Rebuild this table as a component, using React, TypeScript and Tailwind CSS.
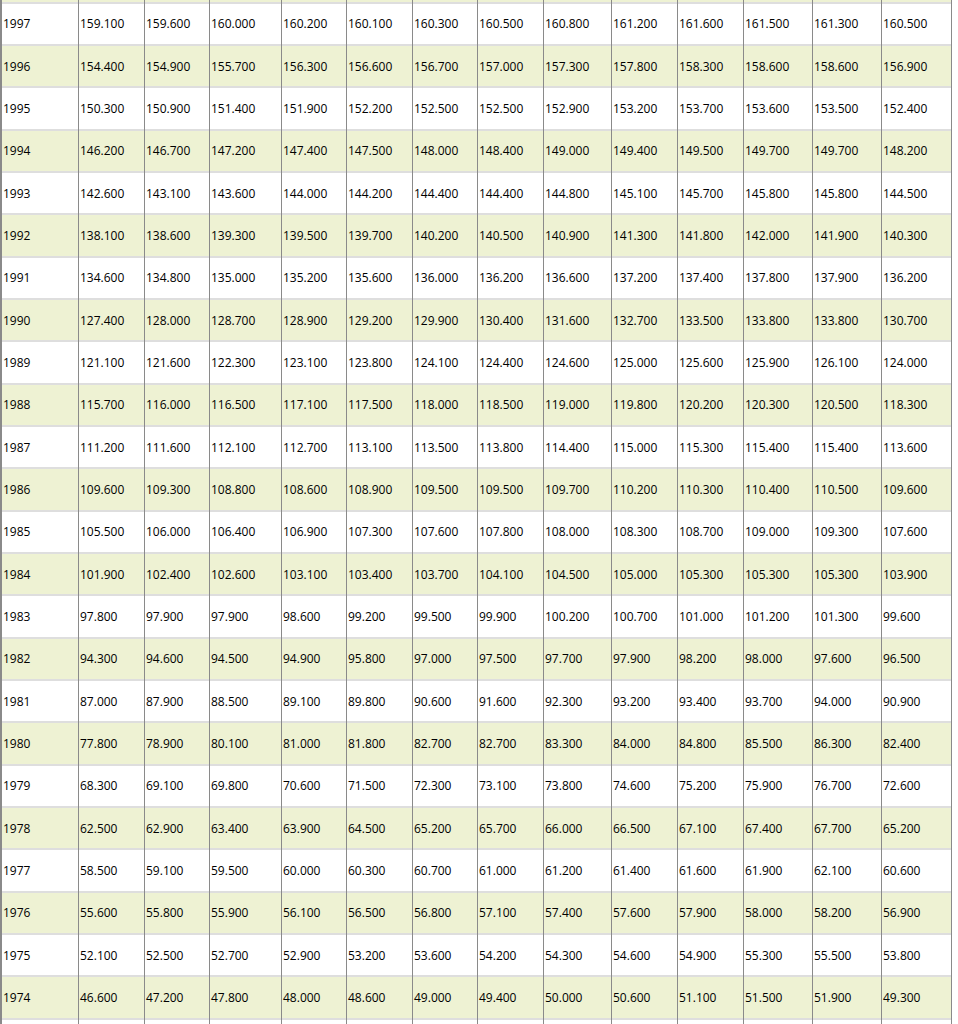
import React from 'react';

const widths = [
  'w-[77px]', 'w-[66px]', 'w-[65px]', 'w-[72px]', 'w-[65px]', 'w-[66px]', 'w-[65px]',
  'w-[66px]', 'w-[68px]', 'w-[66px]', 'w-[66px]', 'w-[69px]', 'w-[69px]', 'w-[70px]',
];

const rows: [string, string][] = [
  ['1998', ''],
  ['1997', '159.100 159.600 160.000 160.200 160.100 160.300 160.500 160.800 161.200 161.600 161.500 161.300 160.500'],
  ['1996', '154.400 154.900 155.700 156.300 156.600 156.700 157.000 157.300 157.800 158.300 158.600 158.600 156.900'],
  ['1995', '150.300 150.900 151.400 151.900 152.200 152.500 152.500 152.900 153.200 153.700 153.600 153.500 152.400'],
  ['1994', '146.200 146.700 147.200 147.400 147.500 148.000 148.400 149.000 149.400 149.500 149.700 149.700 148.200'],
  ['1993', '142.600 143.100 143.600 144.000 144.200 144.400 144.400 144.800 145.100 145.700 145.800 145.800 144.500'],
  ['1992', '138.100 138.600 139.300 139.500 139.700 140.200 140.500 140.900 141.300 141.800 142.000 141.900 140.300'],
  ['1991', '134.600 134.800 135.000 135.200 135.600 136.000 136.200 136.600 137.200 137.400 137.800 137.900 136.200'],
  ['1990', '127.400 128.000 128.700 128.900 129.200 129.900 130.400 131.600 132.700 133.500 133.800 133.800 130.700'],
  ['1989', '121.100 121.600 122.300 123.100 123.800 124.100 124.400 124.600 125.000 125.600 125.900 126.100 124.000'],
  ['1988', '115.700 116.000 116.500 117.100 117.500 118.000 118.500 119.000 119.800 120.200 120.300 120.500 118.300'],
  ['1987', '111.200 111.600 112.100 112.700 113.100 113.500 113.800 114.400 115.000 115.300 115.400 115.400 113.600'],
  ['1986', '109.600 109.300 108.800 108.600 108.900 109.500 109.500 109.700 110.200 110.300 110.400 110.500 109.600'],
  ['1985', '105.500 106.000 106.400 106.900 107.300 107.600 107.800 108.000 108.300 108.700 109.000 109.300 107.600'],
  ['1984', '101.900 102.400 102.600 103.100 103.400 103.700 104.100 104.500 105.000 105.300 105.300 105.300 103.900'],
  ['1983', '97.800 97.900 97.900 98.600 99.200 99.500 99.900 100.200 100.700 101.000 101.200 101.300 99.600'],
  ['1982', '94.300 94.600 94.500 94.900 95.800 97.000 97.500 97.700 97.900 98.200 98.000 97.600 96.500'],
  ['1981', '87.000 87.900 88.500 89.100 89.800 90.600 91.600 92.300 93.200 93.400 93.700 94.000 90.900'],
  ['1980', '77.800 78.900 80.100 81.000 81.800 82.700 82.700 83.300 84.000 84.800 85.500 86.300 82.400'],
  ['1979', '68.300 69.100 69.800 70.600 71.500 72.300 73.100 73.800 74.600 75.200 75.900 76.700 72.600'],
  ['1978', '62.500 62.900 63.400 63.900 64.500 65.200 65.700 66.000 66.500 67.100 67.400 67.700 65.200'],
  ['1977', '58.500 59.100 59.500 60.000 60.300 60.700 61.000 61.200 61.400 61.600 61.900 62.100 60.600'],
  ['1976', '55.600 55.800 55.900 56.100 56.500 56.800 57.100 57.400 57.600 57.900 58.000 58.200 56.900'],
  ['1975', '52.100 52.500 52.700 52.900 53.200 53.600 54.200 54.300 54.600 54.900 55.300 55.500 53.800'],
  ['1974', '46.600 47.200 47.800 48.000 48.600 49.000 49.400 50.000 50.600 51.100 51.500 51.900 49.300'],
  ['1973', ''],
];

function Row({ year, values, shaded }: { year: string; values: string[]; shaded: boolean }) {
  const cells = [year, ...values];
  return (
    <div className={`flex ${shaded ? 'bg-[#eef2d3]' : 'bg-white'}`}>
      {widths.map((w, i) => (
        <div key={i} className={`${w} h-[42.33px] shrink-0 flex flex-col border-r border-[#8a8a8a]`}>
          <div className="h-[2px] bg-[#dedede]" />
          <div className="flex-1 flex items-center pl-[1px] pt-[1px] text-[12px] text-black whitespace-nowrap">
            {cells[i] ?? ''}
          </div>
        </div>
      ))}
    </div>
  );
}

export default function App() {
  return (
    <div className="w-[958px] h-[1024px] overflow-hidden bg-white" style={{ fontFamily: '"Open Sans", "Noto Sans", sans-serif' }}>
      <div className="mt-[-40.5px] w-[951px] border-l-2 border-[#8a8a8a]">
        {rows.map(([year, vals], idx) => (
          <Row key={year} year={year === '1998' || year === '1973' ? '' : year} values={vals ? vals.split(' ') : []} shaded={idx % 2 === 0} />
        ))}
      </div>
    </div>
  );
}
